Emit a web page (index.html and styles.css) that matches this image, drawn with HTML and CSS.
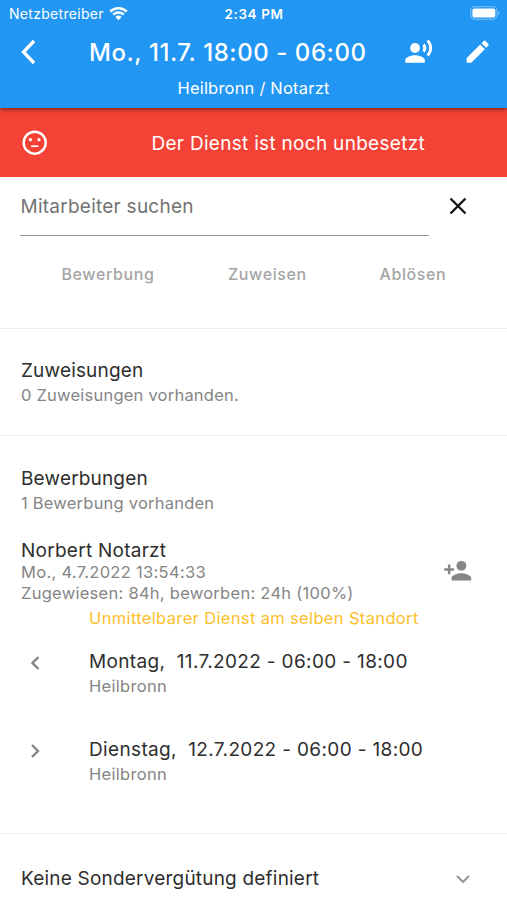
FILE: index.html
```html
<!DOCTYPE html>
<html lang="de">
<head>
<meta charset="utf-8">
<title>Dienst</title>
<link rel="stylesheet" href="styles.css">
</head>
<body>
<header class="appbar">
  <div class="status">
    <div class="carrier"><span class="carrier-name">Netzbetreiber</span>
      <svg class="wifi" viewBox="0 0 18 14"><path d="M1.2 5.2a11.2 11.2 0 0 1 15.6 0M4 8.1a7.2 7.2 0 0 1 10 0" fill="none" stroke="#fff" stroke-width="2.300"/><path d="M6.1 10.3a4.2 4.2 0 0 1 5.8 0L9 13.3z" fill="#fff"/></svg>
    </div>
    <span class="time">2:34 PM</span>
    <svg class="battery" viewBox="0 0 30 14"><rect x=".7" y=".7" width="26.3" height="12.6" rx="4" fill="none" stroke="#fff" stroke-opacity=".35" stroke-width="1.2"/><rect x="2.4" y="2.4" width="22.9" height="9.2" rx="2.2" fill="#fff"/><path d="M28.2 5v4c1.5-.6 1.5-3.400 0-4z" fill="#fff" fill-opacity=".5"/></svg>
  </div>
  <div class="toolbar">
    <svg class="back" viewBox="0 0 16 26"><path d="M14 2 3.500 13 14 24" fill="none" stroke="#fff" stroke-width="3.300"/></svg>
    <h1 class="title">Mo., 11.7. 18:00 - 06:00</h1>
    <svg class="icon voice" viewBox="0 0 24 24"><circle cx="9" cy="9" r="4"/><path d="M9 15c-2.670 0-8 1.340-8 4v2h16v-2c0-2.660-5.330-4-8-4zm7.760-9.640-1.680 1.690c.84 1.180.84 2.710 0 3.890l1.680 1.690c2.020-2.020 2.020-5.070 0-7.270zM20.070 2l-1.630 1.630c2.770 3.020 2.770 7.560 0 10.740L20.070 16c3.900-3.890 3.910-9.950 0-14z"/></svg>
    <svg class="icon" viewBox="0 0 24 24"><path d="M3 17.250V21h3.750L17.810 9.940l-3.750-3.750L3 17.250zM20.710 7.040a1 1 0 0 0 0-1.410l-2.340-2.340a1 1 0 0 0-1.410 0l-1.830 1.830 3.750 3.750 1.830-1.830z"/></svg>
  </div>
  <p class="subtitle">Heilbronn / Notarzt</p>
</header>
<main>
  <section class="alert">
    <svg class="icon" viewBox="0 0 24 24"><path d="M9 15.500h6v-1.300H9z"/><circle cx="15.500" cy="9.500" r="1.300"/><circle cx="8.500" cy="9.500" r="1.300"/><circle cx="12" cy="12" r="9" fill="none" stroke="#fff" stroke-width="2"/></svg>
    <span class="alert-text">Der Dienst ist noch unbesetzt</span>
  </section>
  <section class="search">
    <div class="search-row">
      <div class="field"><span class="placeholder">Mitarbeiter suchen</span></div>
      <svg class="clear" viewBox="0 0 18 18"><path d="m1.500 1.500 15 15m0-15-15 15" stroke="#111" stroke-width="2.300" fill="none"/></svg>
    </div>
    <div class="actions"><span class="action apply">Bewerbung</span><span class="action assign">Zuweisen</span><span class="action replace">Ablösen</span></div>
  </section>
  <section class="block assignments">
    <h2 class="heading">Zuweisungen</h2>
    <p class="sub">0 Zuweisungen vorhanden.</p>
  </section>
  <section class="block applications">
    <h2 class="heading">Bewerbungen</h2>
    <p class="sub">1 Bewerbung vorhanden</p>
    <div class="applicant">
      <div class="applicant-info">
        <h2 class="heading name">Norbert Notarzt</h2>
        <p class="meta">Mo., 4.7.2022 13:54:33</p>
        <p class="meta hours">Zugewiesen: 84h, beworben: 24h (100%)</p>
      </div>
      <svg class="add" viewBox="0 0 24 24"><circle cx="15" cy="8" r="4"/><path d="M6 10V7H4v3H1v2h3v3h2v-3h3v-2zm9 4c-2.670 0-8 1.340-8 4v2h16v-2c0-2.660-5.330-4-8-4z"/></svg>
    </div>
    <p class="notice">Unmittelbarer Dienst am selben Standort</p>
    <div class="shift">
      <svg class="chev" viewBox="0 0 10 16"><path d="m8.500 2-6 6 6 6"/></svg>
      <div><h2 class="heading day">Montag,&nbsp; 11.7.2022 - 06:00 - 18:00</h2><p class="sub place">Heilbronn</p></div>
    </div>
    <div class="shift">
      <svg class="chev" viewBox="0 0 10 16"><path d="m2 2 6 6-6 6"/></svg>
      <div><h2 class="heading day">Dienstag,&nbsp; 12.7.2022 - 06:00 - 18:00</h2><p class="sub place">Heilbronn</p></div>
    </div>
  </section>
  <section class="bonus">
    <h2 class="heading">Keine Sondervergütung definiert</h2>
    <svg class="down" viewBox="0 0 16 10"><path d="m2 2 6 6 6-6"/></svg>
  </section>
</main>
</body>
</html>
```
FILE: styles.css
```css
* { box-sizing: border-box; }
body { margin: 0; width: 507px; height: 900px; overflow: hidden; background: #fff; font-family: Inter, "Liberation Sans", sans-serif; color: #2e2e2e; }
h1, h2, p { margin: 0; font-weight: 400; white-space: nowrap; }
svg { display: block; flex: none; }
.appbar { position: relative; z-index: 1; height: 108px; background: #2196f3; color: #fff; box-shadow: 0 1px 5px rgba(0,0,0,.6); }
.status { display: grid; grid-template-columns: 1fr auto 1fr; align-items: center; height: 27px; padding: 0 7px 0 9px; }
.carrier { display: flex; align-items: center; gap: 5.500px; font-size: 14px; letter-spacing: .3px; }
.wifi { width: 19px; height: 15px; margin-top: -1px; }
.time { font-size: 13.500px; font-weight: 600; letter-spacing: .6px; margin-left: -1px; }
.battery { width: 30px; height: 14px; justify-self: end; margin-top: -1px; }
.toolbar { display: flex; align-items: center; height: 50px; padding: 0 15px 0 20px; }
.back { width: 16px; height: 26px; }
.title { width: 315px; margin-left: 53px; padding-top: 1px; font-size: 24px; line-height: 30px; font-weight: 500; letter-spacing: .56px; }
.icon { width: 29.400px; height: 29.400px; fill: #fff; }
.voice { margin-right: 29.500px; }
.subtitle { text-align: center; font-size: 16.500px; line-height: 22px; letter-spacing: .2px; }
.alert { display: flex; align-items: center; height: 69px; padding-left: 20px; background: #f44336; color: #fff; }
.alert-text { padding: 1px 0 0 102px; font-size: 19px; letter-spacing: .3px; }
.search { height: 152px; border-bottom: 1px solid #ececec; }
.search-row { display: flex; align-items: flex-start; padding-left: 20px; height: 59px; }
.field { width: 409px; height: 59px; border-bottom: 1px solid #929292; padding: 18px 0 0 .5px; line-height: 24px; font-size: 19px; letter-spacing: .25px; color: #737373; }
.clear { width: 18px; height: 18px; margin: 20px 0 0 20px; }
.actions { display: flex; padding: 27px 0 0 61.500px; font-size: 16px; line-height: 22px; font-weight: 500; color: #a5a5a5; letter-spacing: .6px; }
.apply { width: 166.500px; }
.assign { width: 151.500px; }
.block { padding-left: 21px; border-bottom: 1px solid #ececec; }
.assignments { height: 107px; padding-top: 29px; }
.applications { height: 398px; padding-top: 30px; }
.heading { font-size: 19px; line-height: 26px; letter-spacing: .17px; }
.sub { margin-top: -1px; font-size: 16.500px; line-height: 24px; color: #858585; letter-spacing: .22px; }
.applicant { display: flex; align-items: center; justify-content: space-between; margin-top: 23px; padding-right: 35px; }
.meta { font-size: 16.500px; line-height: 21px; color: #858585; letter-spacing: .3px; }
.hours { letter-spacing: .27px; }
.name { line-height: 25px; margin-bottom: -1px; letter-spacing: .26px; }
.add { width: 29.400px; height: 29.400px; fill: #858585; }
.notice { margin: 2px 0 0 68px; font-size: 16.500px; line-height: 24px; color: #fdc02b; letter-spacing: .35px; }
.shift { display: flex; align-items: flex-start; gap: 49px; height: 88px; padding: 19px 0 0 9px; }
.day { letter-spacing: .35px; }
.place { letter-spacing: .3px; }
.chev { width: 10px; height: 16px; margin-top: 6px; }
.chev path { fill: none; stroke: #858585; stroke-width: 2.400; }
.bonus { display: flex; align-items: center; justify-content: space-between; height: 90px; padding: 0 36px 0 21px; }
.bonus .heading { letter-spacing: .2px; }
.down { width: 16px; height: 10px; margin-top: -1px; }
.down path { fill: none; stroke: #999; stroke-width: 2.200; }
```
